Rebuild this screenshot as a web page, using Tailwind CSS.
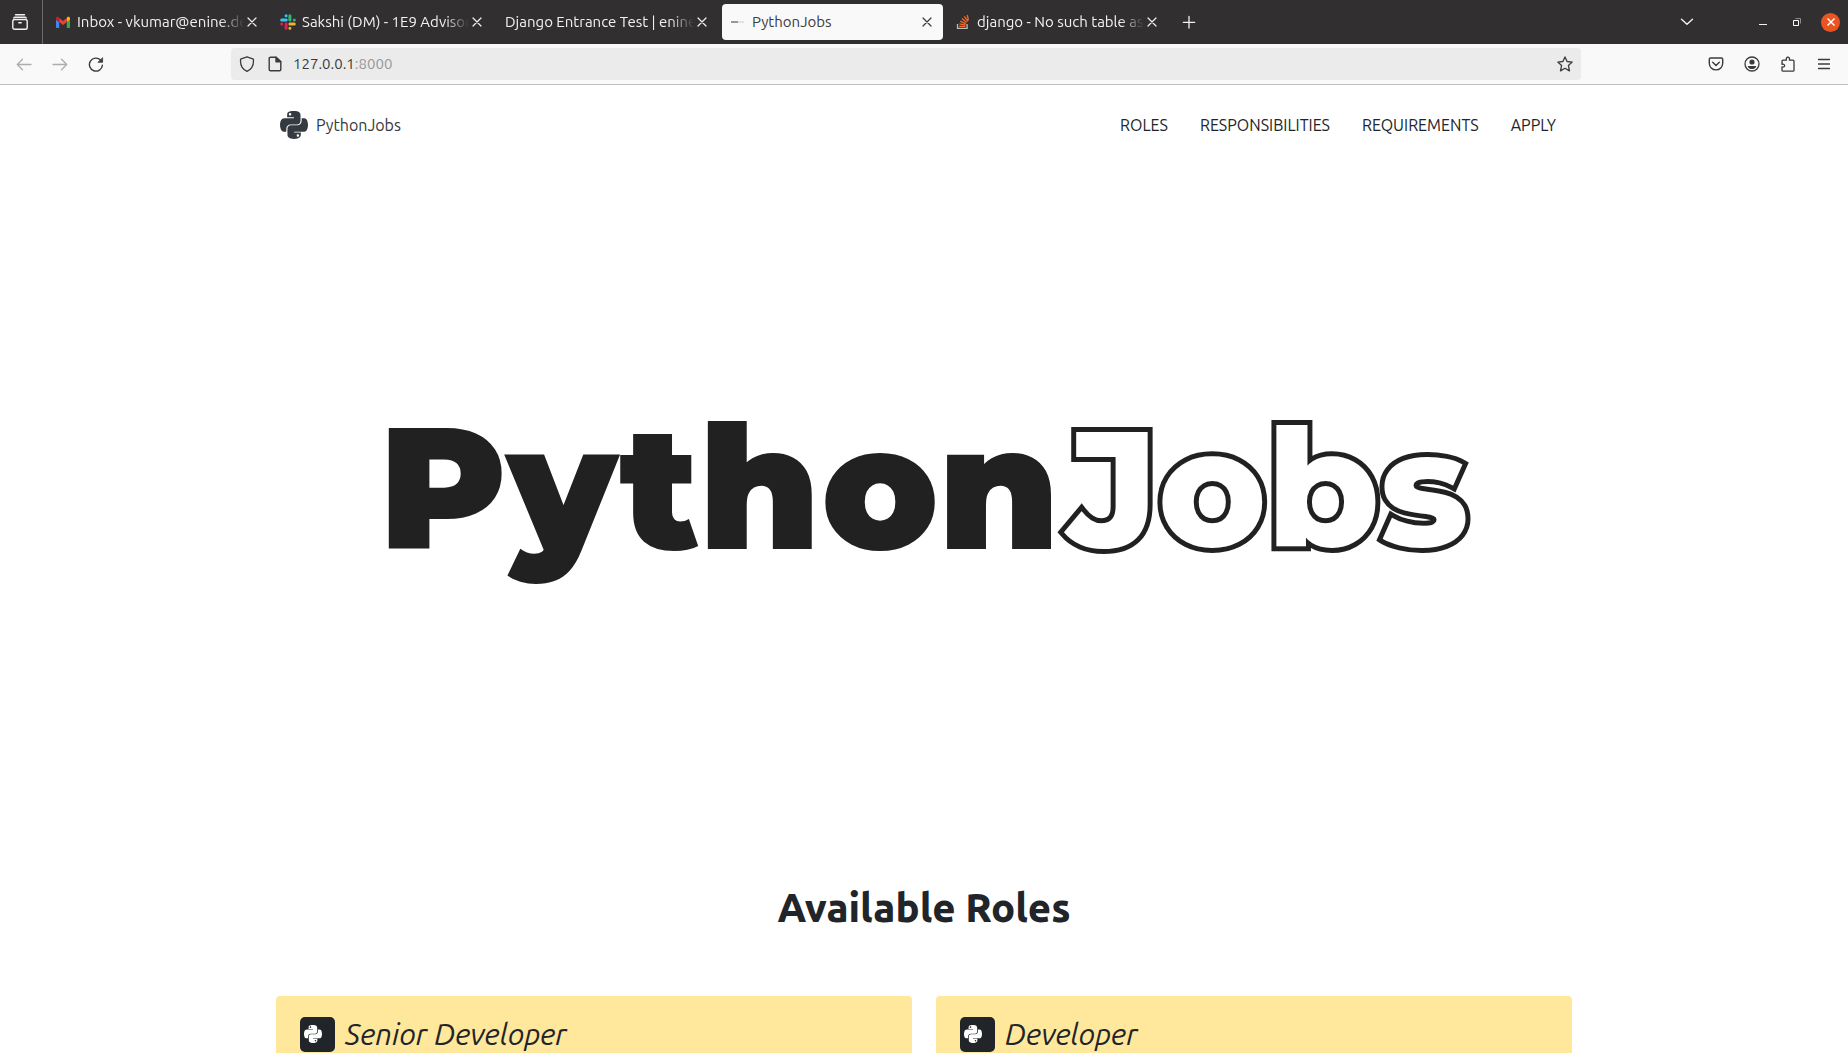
<!DOCTYPE html>
<html lang="en">
<head>
<meta charset="utf-8">
<title>PythonJobs</title>
<script src="https://cdn.jsdelivr.net/npm/@tailwindcss/browser@4"></script>
</head>
<body class="flex h-screen flex-col overflow-hidden bg-white font-['Ubuntu','Noto_Sans',sans-serif] text-[#212529]">

<svg class="hidden" aria-hidden="true">
  <symbol id="python" viewBox="0 32 448 448"><path d="M439.8 200.5c-7.7-30.9-22.3-54.2-53.4-54.2h-40.1v47.4c0 36.8-31.2 67.8-66.8 67.8H172.7c-29.2 0-53.4 25-53.4 54.3v101.8c0 29 25.2 46 53.4 54.3 33.8 9.9 66.3 11.7 106.8 0 26.9-7.8 53.4-23.5 53.4-54.3v-40.7H226.2v-13.6h160.2c31.1 0 42.6-21.7 53.4-54.2 11.2-33.5 10.7-65.7 0-108.6zM286.2 404c11.1 0 20.1 9.1 20.1 20.3 0 11.3-9 20.4-20.1 20.4-11 0-20.1-9.2-20.1-20.4.1-11.3 9.1-20.3 20.1-20.3zM167.8 248.1h106.8c29.7 0 53.4-24.5 53.4-54.3V91.9c0-29-24.4-50.7-53.4-55.6-35.8-5.9-74.7-5.6-106.8.1-45.2 8-53.4 24.7-53.4 55.6v40.7h106.900v13.6h-147c-31.1 0-58.3 18.7-66.8 54.2-9.8 40.7-10.2 66.1 0 108.6 7.6 31.6 25.7 54.2 56.8 54.2H101v-48.8c0-35.3 30.5-66.4 66.8-66.4zm-6.7-142.6c-11.1 0-20.1-9.1-20.1-20.3.1-11.3 9-20.4 20.1-20.4 11 0 20.1 9.2 20.1 20.4s-9 20.3-20.1 20.3z"/></symbol>
  <symbol id="close" viewBox="0 0 16 16"><path d="M4 4l8 8M12 4l-8 8" fill="none" stroke="currentColor" stroke-width="1.2" stroke-linecap="round"/></symbol>
</svg>

<header class="shrink-0 text-[15px] leading-5">
  <div class="flex h-11 items-center bg-[#322f30] text-[#f2f2f2]">
    <button class="flex h-11 w-[43px] shrink-0 items-center justify-center border-r border-[#6b696a] pr-0.5" aria-label="View recent browsing">
      <svg class="size-4" viewBox="0 0 16 16" fill="none" stroke="currentColor" stroke-width="1.4" stroke-linecap="round"><path d="M3.500 .8h9M1.800 4c.2-.5.700-.8 1.400-.8h9.600c.7 0 1.200.3 1.400.8"/><rect x=".8" y="5.500" width="14.400" height="9.700" rx="1.800"/><path d="M6.800 8.800h2.400"/></svg>
    </button>
    <div class="flex shrink-0 pl-0.5">
      <div class="flex h-11 w-[225px] items-center px-2.5">
        <svg class="mr-1.5 size-4 shrink-0" viewBox="0 0 16 16"><path d="M2 14h2.200V8.100L1 5.700V13c0 .6.400 1 1 1z" fill="#4285f4"/><path d="M11.800 14H14c.6 0 1-.4 1-1V5.700l-3.200 2.400z" fill="#34a853"/><path d="M11.800 4v4.100L15 5.700V4.400c0-1.500-1.700-2-2.600-1.300z" fill="#fbbc04"/><path d="M4.200 8.100V4L8 6.900 11.800 4v4.100L8 11z" fill="#ea4335"/><path d="M1 4.400v1.300l3.200 2.400V4l-.6-.9C2.700 2.400 1 2.900 1 4.400z" fill="#c5221f"/></svg>
        <span class="flex-1 overflow-hidden whitespace-nowrap [mask-image:linear-gradient(to_left,transparent,black_24px)]">Inbox - vkumar@enine.de</span>
        <button class="shrink-0" aria-label="Close tab"><svg class="size-4"><use href="#close"/></svg></button>
      </div>
      <div class="flex h-11 w-[225px] items-center px-2.5">
        <svg class="mr-1.5 size-4 shrink-0" viewBox="0 0 16 16" stroke-width="3" stroke-linecap="round"><path d="M1.700 6.100H6.200M6.100 1.700h.01" stroke="#36c5f0"/><path d="M9.900 1.700V6.100M14.300 6.100h.01" stroke="#2eb67d"/><path d="M9.900 9.900h4.400M9.900 14.300h.01" stroke="#ecb22e"/><path d="M6.100 9.900v4.400M1.700 9.900h.01" stroke="#e01e5a"/></svg>
        <span class="flex-1 overflow-hidden whitespace-nowrap [mask-image:linear-gradient(to_left,transparent,black_24px)]">Sakshi (DM) - 1E9 Advisor</span>
        <button class="shrink-0" aria-label="Close tab"><svg class="size-4"><use href="#close"/></svg></button>
      </div>
      <div class="flex h-11 w-[225px] items-center px-2.5">
        <span class="flex-1 overflow-hidden whitespace-nowrap [mask-image:linear-gradient(to_left,transparent,black_24px)]">Django Entrance Test | enine</span>
        <button class="shrink-0" aria-label="Close tab"><svg class="size-4"><use href="#close"/></svg></button>
      </div>
      <div class="flex h-11 w-[225px] items-center px-0.5">
        <div class="flex h-9 w-full items-center rounded bg-[#f9f9fa] px-2 text-[#3b3b3d]">
          <svg class="mr-1.5 size-4 shrink-0" viewBox="0 0 16 16"><path d="M1 8h7" stroke="#555" stroke-width="1.200"/><path d="M8 8h6" stroke="#ccc" stroke-width="1"/></svg>
          <span class="flex-1 overflow-hidden whitespace-nowrap">PythonJobs</span>
          <button class="shrink-0" aria-label="Close tab"><svg class="size-4"><use href="#close"/></svg></button>
        </div>
      </div>
      <div class="flex h-11 w-[225px] items-center px-2.5">
        <svg class="mr-1.5 size-4 shrink-0" viewBox="0 0 16 16" fill="none"><path d="M2.500 10v4.300h9.600V10" stroke="#bcbbbb" stroke-width="1.300"/><path d="M4.200 12.400h6.200M4.400 9.900l6.100 1.200M5.200 7.200l5.600 2.600M6.900 4.500l4.800 3.900M9.300 2.300l3.600 5M12.300 1l1.100 5.500" stroke="#f26a2a" stroke-width="1.300"/></svg>
        <span class="flex-1 overflow-hidden whitespace-nowrap [mask-image:linear-gradient(to_left,transparent,black_24px)]">django - No such table as</span>
        <button class="shrink-0" aria-label="Close tab"><svg class="size-4"><use href="#close"/></svg></button>
      </div>
    </div>
    <button class="flex w-[38px] justify-center" aria-label="New tab"><svg class="size-4" viewBox="0 0 16 16" stroke="currentColor" stroke-width="1.300" stroke-linecap="round"><path d="M8 2.500v11.500M2.300 8.300h11.400"/></svg></button>
    <div class="ml-auto flex items-center pr-2">
      <button class="mr-15" aria-label="List all tabs"><svg class="size-4" viewBox="0 0 16 16" fill="none" stroke="currentColor" stroke-width="1.400" stroke-linecap="round" stroke-linejoin="round"><path d="M2.500 5.300L8 10.300l5.500-5"/></svg></button>
      <button class="mr-[18px]" aria-label="Minimize"><svg class="size-4" viewBox="0 0 16 16"><path d="M4 10h8v1H4z" fill="currentColor"/></svg></button>
      <button class="mr-4" aria-label="Restore"><svg class="size-4" viewBox="0 0 16 16" fill="none"><path d="M6.500 4.500h5v5" stroke="#8d8b8c"/><path d="M4.500 6.500h5v5h-5z" stroke="#fff"/></svg></button>
      <button class="flex size-[19px] items-center justify-center rounded-full bg-[#e95420] text-white" aria-label="Close window"><svg class="size-4" viewBox="0 0 16 16"><path d="M4.500 4.500l7 7M11.500 4.500l-7 7" stroke="currentColor" stroke-width="1.500"/></svg></button>
    </div>
  </div>

  <div class="flex h-[41px] items-center border-b border-[#bfbfc0] bg-[#f9f9fa] px-1.5 text-[#3b3b3d]">
    <button class="flex w-9 justify-center text-[#adadae]" aria-label="Back"><svg class="size-4" viewBox="0 0 16 16" fill="none" stroke="currentColor" stroke-width="1.300" stroke-linecap="round" stroke-linejoin="round"><path d="M15 8.500H1.500M6.500 3.300L1.300 8.500l5.200 5.200"/></svg></button>
    <button class="flex w-9 justify-center text-[#adadae]" aria-label="Forward"><svg class="size-4" viewBox="0 0 16 16" fill="none" stroke="currentColor" stroke-width="1.300" stroke-linecap="round" stroke-linejoin="round"><path d="M1 8.500h13.500M9.500 3.300l5.200 5.200-5.200 5.200"/></svg></button>
    <button class="flex w-9 justify-center" aria-label="Reload"><svg class="size-4" viewBox="0 0 16 16" fill="none" stroke="currentColor" stroke-width="1.400" stroke-linecap="round"><path d="M14.400 9.200A6.500 6.500 0 1 1 12.600 4.100"/><path d="M14.600 2v4.300h-4.300z" fill="currentColor" stroke-width=".8" stroke-linejoin="round"/></svg></button>
    <div class="flex-1"></div>
    <div class="flex h-8 w-[1350px] max-w-[74%] items-center rounded bg-[#ebebeb] px-2">
      <svg class="size-4 shrink-0" viewBox="0 0 16 16" fill="none" stroke="currentColor" stroke-width="1.300" stroke-linejoin="round"><path d="M8 .8l6.400 2.400c.5 5.400-1.300 9.800-6.400 12.200C2.900 13 1.100 8.600 1.600 3.200z"/></svg>
      <svg class="ml-3 size-4 shrink-0" viewBox="0 0 16 16" fill="none" stroke="currentColor" stroke-width="1.400" stroke-linejoin="round"><path d="M3.500 1.200H9l4.800 4.600v7.600c0 .8-.5 1.300-1.300 1.300h-9c-.8 0-1.300-.5-1.300-1.300v-11c0-.7.500-1.200 1.300-1.200z"/><path d="M9 1.200v4.600h4.800z" fill="currentColor"/></svg>
      <a href="#" class="ml-2.5 flex-1" aria-label="Address">127.0.0.1<span class="text-[#98989a]">:8000</span></a>
      <button aria-label="Bookmark this page"><svg class="size-4" viewBox="0 0 16 16" fill="none" stroke="currentColor" stroke-width="1.300" stroke-linejoin="round"><path d="M8 .9l2.100 4.600 5.100.6-3.800 3.400 1.100 5.400L8 12.300l-4.500 2.600 1.100-5.400L.8 6.100l5.100-.6z"/></svg></button>
    </div>
    <div class="flex-1"></div>
    <button class="flex w-9 justify-center" aria-label="Save to Pocket"><svg class="size-4" viewBox="0 0 16 16" fill="none" stroke="currentColor" stroke-width="1.400" stroke-linecap="round" stroke-linejoin="round"><path d="M2.500 2h11c.7 0 1.200.5 1.200 1.200v4A6.700 6.700 0 0 1 1.300 7.200v-4C1.300 2.500 1.800 2 2.500 2z"/><path d="M4.700 6.300L8 9.500l3.300-3.200"/></svg></button>
    <button class="flex w-9 justify-center" aria-label="Account"><svg class="size-4" viewBox="0 0 16 16"><circle cx="8" cy="8" r="7" fill="none" stroke="currentColor" stroke-width="1.300"/><circle cx="8" cy="6" r="2.600" fill="currentColor"/><path d="M3.800 9.900h8.400c0 1.900-2 3.200-4.200 3.200s-4.200-1.300-4.200-3.200z" fill="currentColor"/></svg></button>
    <button class="flex w-9 justify-center" aria-label="Extensions"><svg class="size-4" viewBox="0 0 16 16" fill="none" stroke="currentColor" stroke-width="1.300" stroke-linejoin="round"><path d="M2 14.300V10.800c3.500 1.300 3.500-3.600 0-2.400V5.200c0-.6.400-1 1-1h3.400C5.300.2 10.500.2 9.400 4.200H13c.6 0 1 .4 1 1v9c0 .6-.4 1-1 1H3c-.6 0-1-.3-1-.9z"/></svg></button>
    <button class="flex w-9 justify-center" aria-label="Open menu"><svg class="size-4" viewBox="0 0 16 16" stroke="currentColor" stroke-width="1.300" stroke-linecap="round"><path d="M2.500 3.500h11M2.500 8h11M2.500 12.500h11"/></svg></button>
  </div>
</header>

<main class="min-h-0 flex-1 overflow-hidden">
  <div class="mx-auto max-w-[1320px] px-3">
    <nav class="flex h-20 items-center justify-between">
      <a href="#" class="flex items-center gap-2 pl-1 text-[#343a40]">
        <svg class="size-7 fill-current"><use href="#python"/></svg>PythonJobs
      </a>
      <div class="flex">
        <a href="#roles" class="px-4">ROLES</a>
        <a href="#responsibilities" class="px-4">RESPONSIBILITIES</a>
        <a href="#requirements" class="px-4">REQUIREMENTS</a>
        <a href="#apply" class="px-4">APPLY</a>
      </div>
    </nav>

    <section class="flex h-[646px] items-center justify-center">
      <h1 class="flex items-center gap-2 whitespace-nowrap font-['Montserrat','Inter',sans-serif] leading-none text-[#212121]"><span class="text-[172px] font-black">Python</span><span class="text-[163px] font-extrabold text-white [-webkit-text-stroke:10px_#212121] [paint-order:stroke_fill]">Jobs</span></h1>
    </section>

    <section id="roles" class="pt-[73px]">
      <h2 class="text-center text-[40px] leading-12 font-extrabold">Available Roles</h2>
      <div class="mt-16 grid grid-cols-2 gap-6">
        <article class="h-60 rounded bg-[#ffe79c] px-6 pt-5">
          <h3 class="flex items-center gap-2.5 text-[30px] leading-9 italic"><span class="flex size-[35px] items-center rounded-[5px] bg-[#212529] pl-1"><svg class="size-[18px] fill-white"><use href="#python"/></svg></span>Senior Developer</h3>
        </article>
        <article class="h-60 rounded bg-[#ffe79c] px-6 pt-5">
          <h3 class="flex items-center gap-2.5 text-[30px] leading-9 italic"><span class="flex size-[35px] items-center rounded-[5px] bg-[#212529] pl-1"><svg class="size-[18px] fill-white"><use href="#python"/></svg></span>Developer</h3>
        </article>
      </div>
    </section>
  </div>
</main>
</body>
</html>
